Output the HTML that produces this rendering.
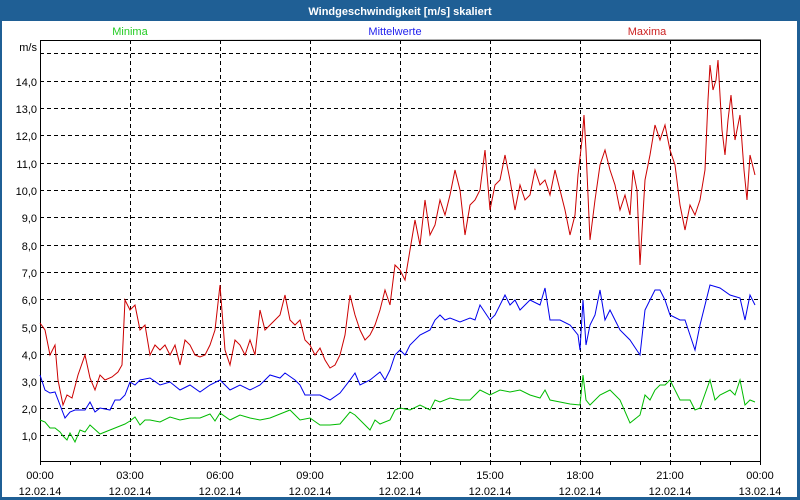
<!DOCTYPE html>
<html><head><meta charset="utf-8"><style>
html,body{margin:0;padding:0;width:800px;height:500px;overflow:hidden;background:#1f5f95}
svg{display:block}
text{font-family:"Liberation Sans",sans-serif;font-size:11px}
</style></head><body>
<svg width="800" height="500" xmlns="http://www.w3.org/2000/svg">
<rect x="0" y="0" width="800" height="500" fill="#1f5f95"/>
<rect x="2" y="21" width="795" height="476" fill="#fff"/>
<text x="400" y="15" text-anchor="middle" fill="#fff" font-weight="bold" font-size="12">Windgeschwindigkeit [m/s] skaliert</text>
<text x="130" y="35" text-anchor="middle" fill="#22cc22">Minima</text>
<text x="395" y="35" text-anchor="middle" fill="#2222ee">Mittelwerte</text>
<text x="647" y="35" text-anchor="middle" fill="#cc2222">Maxima</text>
<text x="37" y="51" text-anchor="end" fill="#000">m/s</text>
<g stroke="#000" stroke-width="1" stroke-dasharray="4,3" fill="none">
<line x1="40" y1="53.5" x2="760" y2="53.5"/>
<line x1="40" y1="81.5" x2="760" y2="81.5"/>
<line x1="40" y1="108.5" x2="760" y2="108.5"/>
<line x1="40" y1="135.5" x2="760" y2="135.5"/>
<line x1="40" y1="163.5" x2="760" y2="163.5"/>
<line x1="40" y1="190.5" x2="760" y2="190.5"/>
<line x1="40" y1="217.5" x2="760" y2="217.5"/>
<line x1="40" y1="245.5" x2="760" y2="245.5"/>
<line x1="40" y1="272.5" x2="760" y2="272.5"/>
<line x1="40" y1="299.5" x2="760" y2="299.5"/>
<line x1="40" y1="327.5" x2="760" y2="327.5"/>
<line x1="40" y1="354.5" x2="760" y2="354.5"/>
<line x1="40" y1="381.5" x2="760" y2="381.5"/>
<line x1="40" y1="408.5" x2="760" y2="408.5"/>
<line x1="40" y1="435.5" x2="760" y2="435.5"/>
<line x1="130.5" y1="40" x2="130.5" y2="461"/>
<line x1="220.5" y1="40" x2="220.5" y2="461"/>
<line x1="310.5" y1="40" x2="310.5" y2="461"/>
<line x1="400.5" y1="40" x2="400.5" y2="461"/>
<line x1="490.5" y1="40" x2="490.5" y2="461"/>
<line x1="580.5" y1="40" x2="580.5" y2="461"/>
<line x1="670.5" y1="40" x2="670.5" y2="461"/>
</g>
<g stroke="#000" stroke-width="1" fill="none">
<polyline points="40.5,40 40.5,461.5 760.5,461.5 760.5,40 40,40.5 760,40.5"/>
<path d="M70.5,461v4M100.5,461v4M130.5,461v4M160.5,461v4M190.5,461v4M220.5,461v4M250.5,461v4M280.5,461v4M310.5,461v4M340.5,461v4M370.5,461v4M400.5,461v4M430.5,461v4M460.5,461v4M490.5,461v4M520.5,461v4M550.5,461v4M580.5,461v4M610.5,461v4M640.5,461v4M670.5,461v4M700.5,461v4M730.5,461v4M760.5,461v4M40.5,461v4"/>
</g>
<g fill="#000" text-anchor="end">
<text x="37" y="86">14,0</text><text x="37" y="113">13,0</text><text x="37" y="140">12,0</text>
<text x="37" y="168">11,0</text><text x="37" y="195">10,0</text><text x="37" y="222">9,0</text>
<text x="37" y="250">8,0</text><text x="37" y="277">7,0</text><text x="37" y="304">6,0</text>
<text x="37" y="332">5,0</text><text x="37" y="359">4,0</text><text x="37" y="386">3,0</text>
<text x="37" y="413">2,0</text><text x="37" y="440">1,0</text>
</g>
<g fill="#000" text-anchor="middle">
<text x="40" y="479">00:00</text><text x="40" y="495">12.02.14</text>
<text x="130" y="479">03:00</text><text x="130" y="495">12.02.14</text>
<text x="220" y="479">06:00</text><text x="220" y="495">12.02.14</text>
<text x="310" y="479">09:00</text><text x="310" y="495">12.02.14</text>
<text x="400" y="479">12:00</text><text x="400" y="495">12.02.14</text>
<text x="490" y="479">15:00</text><text x="490" y="495">12.02.14</text>
<text x="580" y="479">18:00</text><text x="580" y="495">12.02.14</text>
<text x="670" y="479">21:00</text><text x="670" y="495">12.02.14</text>
<text x="760" y="479">00:00</text><text x="760" y="495">13.02.14</text>
</g>
<polyline fill="none" stroke="#cc0000" stroke-width="1" points="40,323 45,330 50,355 55,345 58,380 63,405 67,395 72,398 78,375 85,355 90,378 95,390 100,375 105,380 112,377 118,372 122,365 125,300 130,310 135,305 140,330 145,325 150,355 155,345 160,350 165,345 170,355 175,345 180,365 185,340 190,345 195,355 200,357 205,355 210,345 215,330 220,285 225,350 230,365 235,340 240,345 245,355 250,340 255,355 260,310 265,330 270,325 275,320 280,315 285,295 290,320 295,325 300,320 305,340 310,345 315,355 320,348 325,360 330,368 335,365 340,355 345,335 350,295 355,315 360,330 365,340 370,335 375,325 380,310 385,290 390,305 395,265 400,270 405,280 410,250 415,220 420,245 425,200 430,235 435,225 440,200 445,215 450,195 455,170 460,190 465,235 470,205 475,200 480,190 485,150 490,210 495,185 500,180 505,155 510,180 515,210 520,185 525,200 530,195 535,170 540,185 545,180 550,195 555,170 560,190 565,210 570,235 575,215 578,175 582,140 584,115 586,150 590,240 595,200 600,165 605,150 610,170 615,185 620,210 625,195 630,215 633,170 637,190 640,265 645,180 650,155 655,125 660,140 665,125 670,150 675,165 680,205 685,230 690,205 695,215 700,200 705,170 708,100 710,65 713,90 716,80 718,60 722,130 725,155 728,120 731,95 735,140 740,115 744,170 747,200 750,155 755,175"/>
<polyline fill="none" stroke="#0000ee" stroke-width="1" points="40,375 45,390 50,393 55,392 60,405 65,418 70,412 75,410 85,410 90,402 95,412 100,408 110,410 115,400 120,400 125,395 130,382 135,385 140,380 150,378 160,385 170,382 180,390 190,385 200,392 210,385 220,380 230,390 240,385 250,390 260,385 270,375 280,378 285,373 295,380 300,385 305,395 315,395 320,395 330,400 340,393 350,380 355,373 360,385 370,380 380,372 385,380 390,370 395,355 400,350 405,355 410,345 420,335 430,330 435,320 440,315 445,320 450,318 460,322 470,318 475,320 480,305 490,320 495,315 505,295 510,305 515,300 520,310 530,300 540,305 545,288 550,320 560,320 570,325 578,335 580,350 583,300 586,345 590,325 595,315 600,290 605,320 610,310 615,320 620,330 630,340 640,355 645,310 650,300 655,290 660,290 665,300 670,315 680,320 685,320 690,335 695,350 700,325 710,285 720,288 730,295 740,298 745,320 750,295 755,305"/>
<polyline fill="none" stroke="#00bb00" stroke-width="1" points="40,420 45,422 50,428 55,428 60,432 63,436 67,440 70,433 75,442 80,430 85,432 90,425 100,434 110,430 125,424 130,421 135,417 140,425 145,420 150,420 160,422 170,417 180,420 190,418 200,418 210,414 215,421 220,413 230,420 240,415 250,418 260,420 270,418 280,414 290,410 300,420 310,418 320,425 330,425 340,424 350,412 355,415 360,420 370,430 375,420 380,424 390,420 395,410 400,408 410,410 420,405 430,410 435,400 440,402 450,398 460,400 470,400 480,390 490,395 500,390 510,392 520,390 530,395 540,398 545,390 550,400 560,402 570,404 580,405 583,375 586,400 590,405 600,395 610,390 620,400 630,423 640,415 645,395 650,400 655,390 660,385 665,385 670,380 680,400 690,400 695,410 700,408 710,380 715,400 720,395 730,390 735,395 740,380 745,405 750,400 755,402"/>
</svg>
</body></html>
